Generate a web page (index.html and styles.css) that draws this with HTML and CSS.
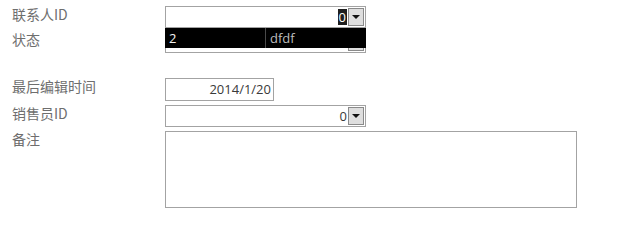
FILE: index.html
```html
<!DOCTYPE html>
<html>
<head>
<meta charset="utf-8">
<link rel="stylesheet" href="styles.css">
</head>
<body>
<div class="form">
  <div class="row row-a">
    <div class="label">联系人ID</div>
    <div class="combo">
      <span class="val"><span class="sel">0</span></span>
      <span class="btn"><span class="tri"></span></span>
    </div>
  </div>
  <div class="row row-b">
    <div class="label">状态</div>
    <div class="combo">
      <span class="val"></span>
      <span class="btn"><span class="tri"></span></span>
    </div>
  </div>
  <div class="row row-c">
    <div class="label lab-c">最后编辑时间</div>
    <div class="textbox date">2014/1/20</div>
  </div>
  <div class="row row-d">
    <div class="label">销售员ID</div>
    <div class="combo">
      <span class="val">0</span>
      <span class="btn"><span class="tri"></span></span>
    </div>
  </div>
  <div class="row row-e">
    <div class="label">备注</div>
    <div class="textbox memo"></div>
  </div>
  <div class="dropdown">
    <div class="cell c1">2</div>
    <div class="cell c2">dfdf</div>
  </div>
</div>
</body>
</html>
```
FILE: styles.css
```css
html, body {
  margin: 0;
  padding: 0;
  background: #ffffff;
}
.form {
  position: relative;
  padding-top: 6px;
  font-family: "Open Sans", "Noto Sans CJK SC", sans-serif;
}
.row {
  display: flex;
  align-items: flex-start;
}
.row-b { margin-top: 3px; }
.row-c { margin-top: 25px; }
.row-d { margin-top: 4px; }
.row-e { margin-top: 4px; }
.label {
  width: 153px;
  padding-left: 12px;
  margin-top: 0;
  font-family: "Noto Sans CJK SC", sans-serif;
  font-size: 14px;
  line-height: 16px;
  color: #6e6e6e;
}
.lab-c { margin-top: 0; }
.combo {
  box-sizing: border-box;
  width: 201px;
  height: 22px;
  border: 1px solid #a3a3a3;
  display: flex;
  align-items: center;
  background: #fff;
}
.val {
  flex: 1;
  text-align: right;
  font-size: 13px;
  line-height: 16px;
  color: #3a3a3a;
  padding-right: 1px;
}
.sel {
  display: inline-block;
  background: #1f1f1f;
  color: #fff;
  padding: 0 1px;
  line-height: 16px;
}
.btn {
  box-sizing: border-box;
  width: 16px;
  height: 18px;
  margin-right: 1px;
  background: #dedede;
  border: 1px solid #8a8a8a;
  display: flex;
  align-items: center;
  justify-content: center;
}
.tri {
  width: 0;
  height: 0;
  border-left: 4px solid transparent;
  border-right: 4px solid transparent;
  border-top: 4px solid #111;
}
.textbox {
  box-sizing: border-box;
  border: 1px solid #a3a3a3;
  background: #fff;
  font-size: 13px;
  color: #3a3a3a;
}
.date {
  width: 109px;
  height: 23px;
  line-height: 21px;
  text-align: right;
  padding-right: 2px;
}
.memo {
  width: 412px;
  height: 77px;
  margin-top: 0;
}
.dropdown {
  position: absolute;
  left: 165px;
  top: 28px;
  width: 201px;
  height: 20px;
  background: #000;
  display: flex;
  font-size: 13px;
  line-height: 20px;
}
.cell {
  box-sizing: border-box;
  padding-left: 4px;
}
.c1 {
  width: 101px;
  color: #f2f2f2;
  border-right: 1px solid #4a4a4a;
}
.c2 {
  flex: 1;
  color: #bdbdbd;
}
```
